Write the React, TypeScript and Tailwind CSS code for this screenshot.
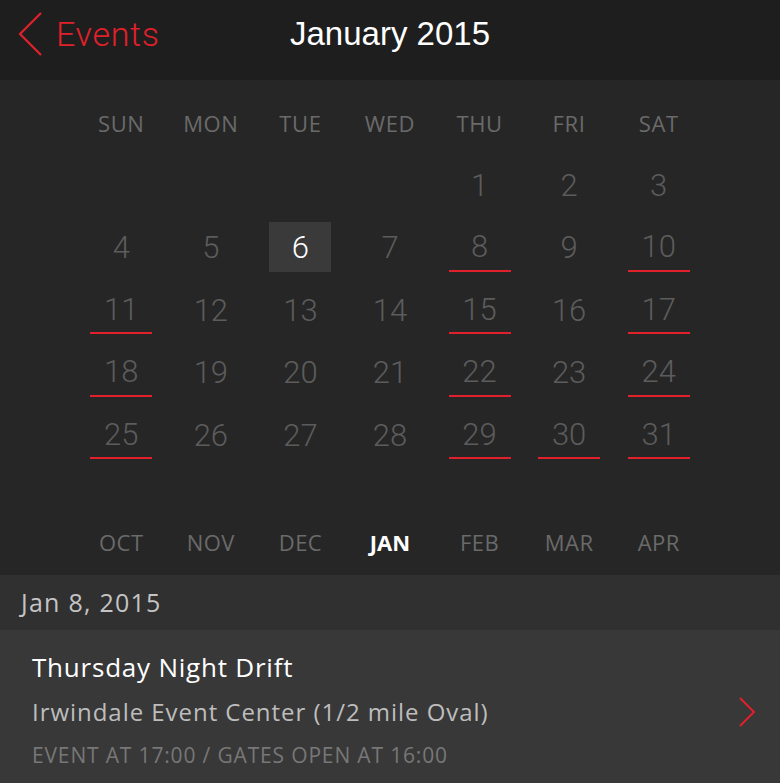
import React from 'react';

const days = ['SUN', 'MON', 'TUE', 'WED', 'THU', 'FRI', 'SAT'];
const months = ['OCT', 'NOV', 'DEC', 'JAN', 'FEB', 'MAR', 'APR'];
const eventDays = [8, 10, 11, 15, 17, 18, 22, 24, 25, 29, 30, 31];

// January 2015 starts on Thursday
const cells: (number | null)[] = [null, null, null, null, ...Array.from({ length: 31 }, (_, i) => i + 1)];

const App = () => {
  return (
    <div className="w-[780px] h-[783px] overflow-hidden bg-[#262626] font-['Open_Sans','Liberation_Sans',sans-serif]">
      {/* nav bar */}
      <div className="relative flex h-[80px] items-center justify-center bg-[#1e1e1e]">
        <div className="absolute left-[16px] top-[11px] flex items-center">
          <svg width="28" height="46" viewBox="0 0 28 46" fill="none">
            <path d="M25 2 L4 23 L25 44" stroke="#e0212b" strokeWidth="2.2" />
          </svg>
          <span className="ml-[12px] font-['Roboto',sans-serif] text-[34px] font-light leading-none tracking-[0.02em] text-[#e0212b]">
            Events
          </span>
        </div>
        <span className="-mt-[14px] font-['Liberation_Sans',sans-serif] text-[33px] leading-none text-white">January 2015</span>
      </div>

      {/* calendar */}
      <div className="h-[495px] bg-[#262626] pt-[29px]">
        <div className="mx-auto grid w-[627px] grid-cols-7">
          {days.map((d) => (
            <div key={d} className="text-center text-[22px] leading-[28px] tracking-[0.03em] text-[#6a6a6a]">
              {d}
            </div>
          ))}
        </div>
        <div className="mx-auto mt-[22px] grid w-[627px] grid-cols-7 gap-y-[12.5px] font-['Roboto',sans-serif]">
          {cells.map((n, i) => (
            <div key={i} className="flex justify-center">
              {n === null ? (
                <div className="h-[50px] w-[62px]" />
              ) : (
                <div
                  className={
                    n === 6
                      ? 'flex h-[50px] w-[62px] items-center justify-center pt-[4px] bg-[#3a3a3a] text-[31px] font-light text-white'
                      : eventDays.includes(n)
                        ? 'flex h-[50px] w-[62px] items-center justify-center border-b-2 border-[#e0212b] pt-[4px] text-[31px] font-light text-[#5c5c5c]'
                        : 'flex h-[50px] w-[62px] items-center justify-center pt-[4px] text-[31px] font-light text-[#5c5c5c]'
                  }
                >
                  {n}
                </div>
              )}
            </div>
          ))}
        </div>
        <div className="mx-auto mt-[69px] grid w-[627px] grid-cols-7">
          {months.map((m) => (
            <div
              key={m}
              className={
                m === 'JAN'
                  ? 'text-center text-[22px] font-bold leading-[28px] text-white'
                  : 'text-center text-[22px] leading-[28px] tracking-[0.02em] text-[#6a6a6a]'
              }
            >
              {m}
            </div>
          ))}
        </div>
      </div>

      {/* selected date header */}
      <div className="flex h-[55px] items-center bg-[#303030] px-[21px]">
        <span className="text-[25px] tracking-[0.05em] text-[#c4c4c4]">Jan 8, 2015</span>
      </div>

      {/* event row */}
      <div className="flex items-center bg-[#383838] pl-[32px] pr-[24px] pt-[20px] pb-[20px]">
        <div className="flex-1">
          <div className="text-[26px] leading-[34px] tracking-[0.03em] text-white">Thursday Night Drift</div>
          <div className="mt-[12px] text-[24px] leading-[32px] tracking-[0.04em] text-[#bdbdbd]">Irwindale Event Center (1/2 mile Oval)</div>
          <div className="mt-[14px] text-[21px] leading-[26px] tracking-[0.04em] text-[#777777]">EVENT AT 17:00 / GATES OPEN AT 16:00</div>
        </div>
        <svg width="18" height="30" viewBox="0 0 18 30" fill="none" className="mt-[6px]">
          <path d="M2 1 L16 15 L2 29" stroke="#e0212b" strokeWidth="2" />
        </svg>
      </div>
    </div>
  );
};

export default App;
